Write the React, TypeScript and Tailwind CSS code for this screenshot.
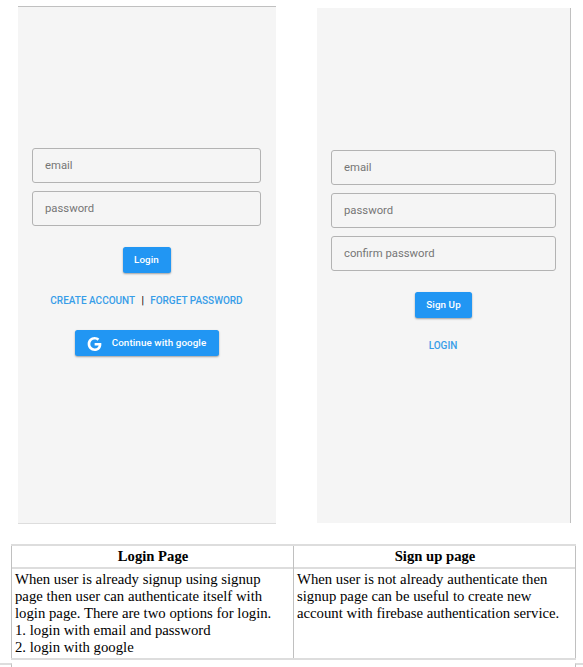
import type { ReactNode } from "react";

function Field({ label }: { label: string }) {
  return (
    <div className="flex h-[35px] w-full items-center rounded-[3px] border border-[#b3b3b3] pt-px pl-3 text-[11.3px] text-[#757575]">
      {label}
    </div>
  );
}

function Button({ className, children }: { className: string; children: ReactNode }) {
  return (
    <button
      className={`flex h-[26px] items-center justify-center rounded-[2.5px] bg-[#2196f3] pt-px text-[9.8px] font-medium tracking-[0.1px] whitespace-nowrap text-white shadow-[0_1px_2px_rgba(0,0,0,0.35)] ${className}`}
    >
      {children}
    </button>
  );
}

function GoogleIcon() {
  return (
    <svg className="mr-[10px] h-[14px] w-[15px]" viewBox="0 0 24 24" fill="white">
      <path d="M12.24 10.285V14.4h6.806c-.275 1.765-2.056 5.174-6.806 5.174-4.095 0-7.439-3.389-7.439-7.574s3.345-7.574 7.439-7.574c2.33 0 3.891.989 4.785 1.849l3.254-3.138C18.189 1.186 15.479 0 12.24 0c-6.635 0-12 5.365-12 12s5.365 12 12 12c6.926 0 11.52-4.869 11.52-11.726 0-.788-.085-1.39-.189-1.989H12.24z" />
    </svg>
  );
}

function LoginScreen() {
  return (
    <section className="mt-[6px] flex h-[518px] w-[258px] flex-col items-center border-t border-b border-t-[#c0c0c0] border-b-[#dddddd] bg-[#f5f5f5] pt-[141px] pr-[15px] pl-[14px]">
      <div className="flex w-full flex-col gap-2">
        <Field label="email" />
        <Field label="password" />
      </div>
      <Button className="mt-[21px] w-12">Login</Button>
      <div className="mt-5 flex h-[14px] items-center text-[10px] font-medium whitespace-nowrap text-[#379de8]">
        <a>CREATE ACCOUNT</a>
        <span className="w-[15px] text-center text-black">|</span>
        <a>FORGET PASSWORD</a>
      </div>
      <Button className="mt-[23px] w-36">
        <GoogleIcon />
        <span>Continue with google</span>
      </Button>
    </section>
  );
}

function SignUpScreen() {
  return (
    <section className="mt-2 flex h-[515px] w-[254px] flex-col items-center border-r border-[#c0c0c0] bg-[#f5f5f5] pt-[142px] pr-[14px] pl-[14px]">
      <div className="flex w-full flex-col gap-2">
        <Field label="email" />
        <Field label="password" />
        <Field label="confirm password" />
      </div>
      <Button className="mt-[21px] w-[57px]">Sign Up</Button>
      <a className="mt-5 mr-px flex h-[14px] items-center text-[10px] font-medium text-[#379de8]">LOGIN</a>
    </section>
  );
}

function Column({ title, lines, className }: { title: string; lines: string[]; className: string }) {
  return (
    <div className={`flex flex-col border-[#c0c0c0] ${className}`}>
      <h2 className="flex h-[23px] items-center justify-center border-b-2 border-[#dddddd] pb-[2px] pl-px text-[14.67px] font-bold">
        {title}
      </h2>
      <div className="pt-[2px] pl-[3px] text-[14.74px] leading-[17px] whitespace-nowrap">
        {lines.map((line) => (
          <p key={line}>{line}</p>
        ))}
      </div>
    </div>
  );
}

export default function App() {
  return (
    <main className="flex h-[667px] w-[583px] flex-col overflow-hidden bg-white text-black">
      <div className="flex h-[544px] items-start gap-[41px] pl-[18px] font-['Roboto',sans-serif]">
        <LoginScreen />
        <SignUpScreen />
      </div>
      <div className="ml-[11px] flex h-[116px] w-[565px] border-t-2 border-b-2 border-[#dddddd] font-['Liberation_Serif',serif]">
        <Column
          className="w-[282px] border-l"
          title="Login Page"
          lines={[
            "When user is already signup using signup",
            "page then user can authenticate itself with",
            "login page. There are two options for login.",
            "1. login with email and password",
            "2. login with google",
          ]}
        />
        <Column
          className="w-[283px] border-r border-l"
          title="Sign up page"
          lines={[
            "When user is not already authenticate then",
            "signup page can be useful to create new",
            "account with firebase authentication service.",
          ]}
        />
      </div>
      <div className="mt-[3px] flex h-1 justify-between">
        <div className="w-3 border-t-2 border-r border-t-[#dddddd] border-r-[#c0c0c0]" />
        <div className="w-2 border-t-2 border-l border-t-[#dddddd] border-l-[#c0c0c0]" />
      </div>
    </main>
  );
}
